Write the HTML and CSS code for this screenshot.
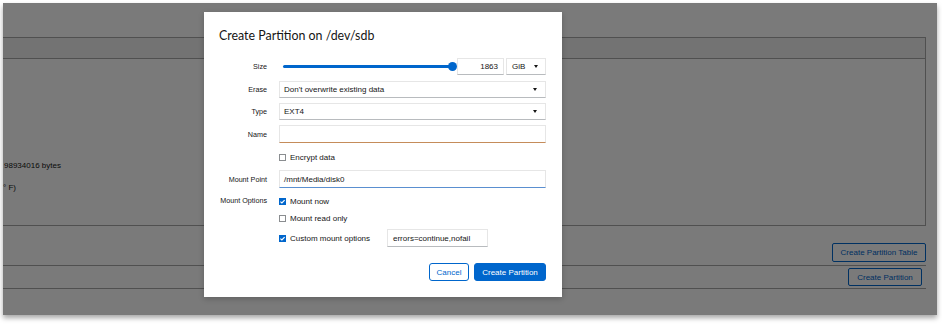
FILE: index.html
```html
<!DOCTYPE html>
<html>
<head>
<meta charset="utf-8">
<link rel="stylesheet" href="styles.css">
</head>
<body>
<div class="screen">
  <div class="page">
    <div class="page-head"></div>
    <div class="table">
      <div class="thead"></div>
      <div class="tbody">
        <div class="info">98934016 bytes</div>
        <div class="info info-second">° F)</div>
      </div>
    </div>
    <div class="actions actions-one">
      <button class="bg-btn">Create Partition Table</button>
    </div>
    <div class="actions actions-two">
      <button class="bg-btn bg-btn-small">Create Partition</button>
    </div>
    <div class="overlay"></div>
    <div class="modal">
      <h1 class="title">Create Partition on /dev/sdb</h1>
      <div class="form">
        <div class="row row-size">
          <label class="lbl">Size</label>
          <div class="ctl size-ctl">
            <div class="slider"><div class="track"><span class="thumb"></span></div></div>
            <div class="field num">1863</div>
            <div class="field select unit"><span>GiB</span><span class="caret"></span></div>
          </div>
        </div>
        <div class="row row-erase">
          <label class="lbl">Erase</label>
          <div class="field select"><span>Don't overwrite existing data</span><span class="caret"></span></div>
        </div>
        <div class="row row-type">
          <label class="lbl">Type</label>
          <div class="field select"><span>EXT4</span><span class="caret"></span></div>
        </div>
        <div class="row row-name">
          <label class="lbl">Name</label>
          <div class="field input name-input"></div>
        </div>
        <div class="row row-check">
          <span class="lbl"></span>
          <div class="check"><span class="box"></span><span>Encrypt data</span></div>
        </div>
        <div class="row row-mount">
          <label class="lbl">Mount Point</label>
          <div class="field input mount-input">/mnt/Media/disk0</div>
        </div>
        <div class="row row-options">
          <label class="lbl lbl-top">Mount Options</label>
          <div class="options">
            <div class="check"><span class="box on"><svg viewBox="0 0 8 8" width="7" height="7"><path d="M1.6 4.1 L3.3 5.7 L6.4 2.3" fill="none" stroke="#fff" stroke-width="1.3"/></svg></span><span>Mount now</span></div>
            <div class="check check-ro"><span class="box"></span><span>Mount read only</span></div>
            <div class="check check-custom"><span class="box on"><svg viewBox="0 0 8 8" width="7" height="7"><path d="M1.6 4.1 L3.3 5.7 L6.4 2.3" fill="none" stroke="#fff" stroke-width="1.3"/></svg></span><span class="custom-text">Custom mount options</span><div class="field input opts-input">errors=continue,nofail</div></div>
          </div>
        </div>
      </div>
      <div class="footer">
        <button class="btn btn-secondary">Cancel</button>
        <button class="btn btn-primary">Create Partition</button>
      </div>
    </div>
  </div>
</div>
</body>
</html>
```

FILE: styles.css
```css
html, body {
  margin: 0;
  padding: 0;
}
body {
  width: 942px;
  height: 327px;
  overflow: hidden;
  background: #ffffff;
  font-family: "Liberation Sans", Arial, sans-serif;
  color: #151515;
}
.screen {
  padding: 3px 0 0 3px;
}
.page {
  position: relative;
  width: 934px;
  height: 312px;
  background: #ffffff;
  box-shadow: 0 3px 5px rgba(0, 0, 0, 0.35);
  display: flex;
  flex-direction: column;
}
.page-head {
  height: 34px;
}
.table {
  margin-right: 11px;
  border-top: 1px solid #a8a8a8;
  border-right: 1px solid #a8a8a8;
}
.thead {
  height: 20px;
  background: #f1f1f1;
  border-bottom: 1px solid #a8a8a8;
}
.tbody {
  height: 167px;
  border-bottom: 1px solid #a8a8a8;
  padding-top: 101px;
  box-sizing: border-box;
}
.info {
  font-size: 8px;
  line-height: 12px;
  padding-left: 1px;
}
.info-second {
  margin-top: 10px;
  padding-left: 0;
}
.actions {
  margin-right: 11px;
  display: flex;
  justify-content: flex-end;
  align-items: flex-end;
  box-sizing: border-box;
}
.actions-one {
  height: 39px;
  padding-bottom: 3px;
}
.actions-two {
  height: 24px;
  border-top: 1px solid #a8a8a8;
  border-bottom: 1px solid #a8a8a8;
  align-items: center;
  padding-right: 4px;
}
.bg-btn {
  font-family: inherit;
  font-size: 8px;
  color: #0066cc;
  background: #ffffff;
  border: 1px solid #0066cc;
  border-radius: 2px;
  height: 19px;
  width: 94px;
  padding: 0;
}
.bg-btn-small {
  width: 74px;
  height: 18px;
}
.overlay {
  position: absolute;
  inset: 0;
  background: rgba(0, 0, 0, 0.52);
}
.modal {
  position: absolute;
  left: 201px;
  top: 9px;
  width: 358px;
  height: 285px;
  box-sizing: border-box;
  padding: 16px 16px 0 15px;
  background: #ffffff;
  box-shadow: 0 2px 6px rgba(0, 0, 0, 0.2);
  display: flex;
  flex-direction: column;
}
.title {
  margin: 0;
  font-family: "Lato", "Liberation Sans", sans-serif;
  font-weight: 400;
  font-size: 12.4px;
  line-height: 15px;
  color: #151515;
}
.form {
  margin-top: 15px;
  display: flex;
  flex-direction: column;
}
.row {
  display: grid;
  grid-template-columns: 48px 267px;
  column-gap: 12px;
  align-items: center;
}
.lbl {
  text-align: right;
  font-size: 7.2px;
  color: #151515;
}
.lbl-top {
  align-self: start;
  line-height: 14px;
}
.field {
  box-sizing: border-box;
  border: 1px solid #e6e6e6;
  border-bottom-color: #b8bbbe;
  background: #ffffff;
  font-size: 8px;
  display: flex;
  align-items: center;
  padding: 0 4px;
}
.select {
  height: 17px;
  justify-content: space-between;
  padding-right: 8px;
}
.input {
  height: 18px;
}
.caret {
  width: 0;
  height: 0;
  border-left: 2.5px solid transparent;
  border-right: 2.5px solid transparent;
  border-top: 3px solid #151515;
}
.row-erase { margin-top: 6px; }
.row-type { margin-top: 5px; }
.row-name { margin-top: 5px; }
.row-check { margin-top: 7px; height: 14px; }
.row-mount { margin-top: 6px; }
.row-options { margin-top: 6px; }
.name-input {
  border-bottom-color: #c58c5a;
}
.mount-input {
  border-bottom-color: #5a8fd0;
}
.size-ctl {
  display: flex;
  align-items: center;
  height: 17px;
}
.slider {
  width: 177px;
  box-sizing: border-box;
  padding: 0 4px;
}
.track {
  position: relative;
  height: 3px;
  border-radius: 2px;
  background: #0066cc;
}
.thumb {
  position: absolute;
  right: -4.5px;
  top: -3px;
  width: 9px;
  height: 9px;
  border-radius: 50%;
  background: #0066cc;
}
.num {
  width: 47px;
  height: 17px;
  margin-left: 1px;
  justify-content: flex-end;
  padding-right: 5px;
}
.unit {
  width: 40px;
  margin-left: 2px;
  padding-left: 5px;
  padding-right: 7px;
}
.check {
  display: flex;
  align-items: center;
  gap: 4px;
  height: 14px;
  font-size: 8px;
}
.box {
  box-sizing: border-box;
  width: 7px;
  height: 7px;
  border: 1px solid #8a8d90;
  background: #ffffff;
  display: flex;
  align-items: center;
  justify-content: center;
}
.box.on {
  border-color: #0066cc;
  background: #0066cc;
}
.box svg {
  display: block;
  flex: none;
}
.options {
  display: flex;
  flex-direction: column;
}
.check-ro { margin-top: 3px; }
.check-custom {
  margin-top: 4px;
  height: 18px;
}
.custom-text {
  width: 93px;
}
.opts-input {
  width: 101px;
  padding-left: 5px;
}
.footer {
  margin-top: 16px;
  display: flex;
  justify-content: flex-end;
  gap: 5px;
}
.btn {
  font-family: inherit;
  font-size: 8px;
  height: 18px;
  border-radius: 3px;
  padding: 0;
  border: 1px solid #0066cc;
}
.btn-secondary {
  width: 40px;
  background: #ffffff;
  color: #0066cc;
}
.btn-primary {
  width: 72px;
  background: #0066cc;
  color: #ffffff;
}
```
